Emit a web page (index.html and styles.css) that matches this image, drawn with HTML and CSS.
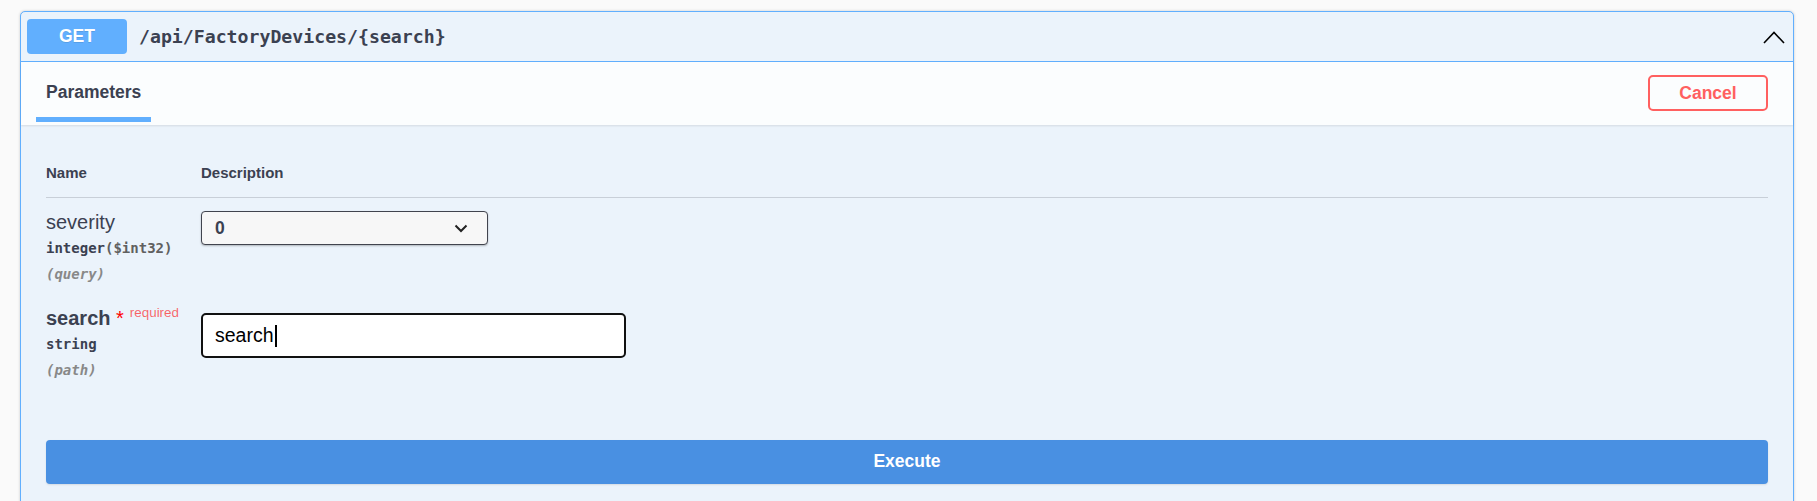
FILE: index.html
```html
<!DOCTYPE html>
<html lang="en">
<head>
<meta charset="utf-8">
<title>GET /api/FactoryDevices/{search}</title>
<link rel="stylesheet" href="styles.css">
</head>
<body>
<div class="opblock">
  <div class="summary">
    <span class="method">GET</span>
    <span class="path">/api/FactoryDevices/{search}</span>
    <svg class="collapse" width="22" height="13" viewBox="0 0 22 13"><polyline points="1,12 11,1.5 21,12" fill="none" stroke="#000" stroke-width="1.6"/></svg>
  </div>
  <div class="section-header">
    <div class="tab"><span class="tab-label">Parameters</span><span class="tab-bar"></span></div>
    <button class="btn-cancel">Cancel</button>
  </div>
  <div class="params">
    <div class="prow thead">
      <div>Name</div>
      <div>Description</div>
    </div>
    <div class="prow">
      <div class="pname-cell">
        <div class="pname">severity</div>
        <div class="ptype">integer<span class="fmt">($int32)</span></div>
        <div class="pin">(query)</div>
      </div>
      <div class="pdesc">
        <div class="select"><span>0</span><svg width="14" height="9" viewBox="0 0 14 9"><polyline points="1.5,1.5 7,7 12.5,1.5" fill="none" stroke="#222" stroke-width="2"/></svg></div>
      </div>
    </div>
    <div class="prow">
      <div class="pname-cell">
        <div class="pname required">search<span class="star">&nbsp;*</span><span class="req">required</span></div>
        <div class="ptype">string</div>
        <div class="pin">(path)</div>
      </div>
      <div class="pdesc">
        <div class="text-input">search<span class="caret"></span></div>
      </div>
    </div>
    <div class="execute-wrapper">
      <button class="btn-execute">Execute</button>
    </div>
  </div>
</div>
</body>
</html>
```
FILE: styles.css
```css
html, body {
  margin: 0;
  background: #fafafa;
}
body {
  padding: 11px 23px 0 20px;
  font-family: "Liberation Sans", Arial, sans-serif;
  color: #3b4151;
  overflow: hidden;
}
.opblock {
  border: 1px solid #61affe;
  border-radius: 5px;
  background: #ebf3fb;
  box-shadow: 0 0 3px rgba(0, 0, 0, .19);
  min-height: 560px;
}
.summary {
  display: flex;
  align-items: center;
  padding: 7px 8px 7px 6px;
  border-bottom: 1px solid #61affe;
}
.method {
  width: 100px;
  height: 35px;
  display: flex;
  align-items: center;
  justify-content: center;
  background: #61affe;
  color: #fff;
  border-radius: 4px;
  font-weight: 700;
  font-size: 17.5px;
  padding-bottom: 1px;
  box-sizing: border-box;
  text-shadow: 0 1px 0 rgba(0, 0, 0, .1);
}
.path {
  flex: 1;
  margin-left: 12px;
  font-family: "DejaVu Sans Mono", monospace;
  font-weight: 700;
  font-size: 18.2px;
  color: #3b4151;
}
.collapse {
  display: block;
  margin-top: 1px;
}
.section-header {
  display: flex;
  justify-content: space-between;
  align-items: flex-start;
  padding: 0 25px;
  height: 63px;
  box-sizing: border-box;
  background: rgba(255, 255, 255, .8);
  box-shadow: 0 1px 2px rgba(0, 0, 0, .1);
}
.tab {
  display: flex;
  flex-direction: column;
  padding-top: 20px;
}
.tab-label {
  font-weight: 700;
  font-size: 17.5px;
  line-height: 20px;
  color: #3b4151;
}
.tab-bar {
  display: block;
  height: 5px;
  margin: 15px -10px 0;
  background: #61affe;
}
.btn-cancel {
  align-self: center;
  width: 120px;
  height: 36px;
  margin-top: -1px;
  background: transparent;
  border: 2px solid #ff6060;
  border-radius: 5px;
  color: #ff6060;
  font-family: "Liberation Sans", Arial, sans-serif;
  font-weight: 700;
  font-size: 17.5px;
  padding: 0;
}
.params {
  padding: 0 25px;
}
.prow {
  display: grid;
  grid-template-columns: 155px 1fr;
  padding: 12px 0 11px;
}
.prow.thead {
  padding: 39px 0 16px;
  font-weight: 700;
  font-size: 15px;
  line-height: 17px;
  border-bottom: 1px solid rgba(59, 65, 81, .2);
}
.pname {
  font-size: 20px;
  line-height: 24px;
  color: #3b4151;
}
.pname.required {
  font-weight: 700;
}
.star {
  color: #f00;
  font-weight: 400;
}
.req {
  font-size: 13.4px;
  font-weight: 400;
  color: rgba(255, 0, 0, .6);
  line-height: 0;
  vertical-align: 8px;
  margin-left: 6px;
}
.ptype {
  padding-top: 5px;
  font-family: "DejaVu Sans Mono", monospace;
  font-weight: 700;
  font-size: 14px;
  line-height: 18px;
  color: #3b4151;
}
.fmt {
  color: #606060;
}
.pin {
  padding-top: 8px;
  font-family: "DejaVu Sans Mono", monospace;
  font-style: italic;
  font-weight: 700;
  font-size: 14px;
  line-height: 18px;
  color: #888;
}
.select {
  margin-top: 1px;
  width: 287px;
  height: 34px;
  box-sizing: border-box;
  display: flex;
  align-items: center;
  justify-content: space-between;
  padding: 0 19px 0 13px;
  background: #f7f7f7;
  border: 1.5px solid #41444e;
  border-radius: 4px;
  box-shadow: 0 1px 2px rgba(0, 0, 0, .25);
  font-weight: 700;
  font-size: 17.5px;
  color: #3b4151;
}
.select svg {
  display: block;
}
.text-input {
  margin-top: 7px;
  width: 425px;
  height: 45px;
  box-sizing: border-box;
  display: flex;
  align-items: center;
  padding-left: 12px;
  background: #fff;
  border: 2px solid #111;
  border-radius: 5px;
  font-size: 19.5px;
  color: #000;
}
.caret {
  display: inline-block;
  width: 2px;
  height: 22px;
  background: #000;
  margin-left: 1px;
}
.execute-wrapper {
  padding-top: 50px;
}
.btn-execute {
  display: block;
  width: 100%;
  height: 44px;
  border: none;
  border-radius: 4px;
  background: #4990e2;
  color: #fff;
  font-family: "Liberation Sans", Arial, sans-serif;
  font-weight: 700;
  font-size: 17.5px;
  box-shadow: 0 1px 2px rgba(0, 0, 0, .1);
  padding: 0 0 2px;
}
```
